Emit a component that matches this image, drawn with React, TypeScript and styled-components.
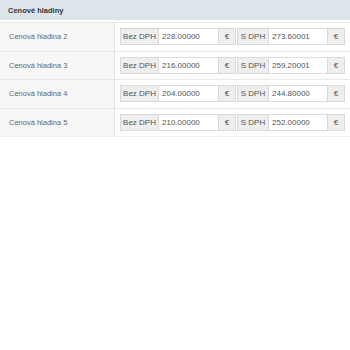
import { Fragment } from "react";
import styled, { createGlobalStyle } from "styled-components";

const GlobalStyle = createGlobalStyle`
  body {
    margin: 0;
    background: #ffffff;
    font-family: "Liberation Sans", Arial, sans-serif;
  }
`;

const Panel = styled.div`
  width: 350px;
  color: #555555;
`;

const PanelHeader = styled.div`
  height: 20px;
  display: flex;
  align-items: center;
  padding: 0 8px;
  background: #dde4ec;
  font-weight: bold;
  font-size: 7.5px;
  color: #333333;
`;

const Table = styled.div`
  display: grid;
  grid-template-columns: 115px 1fr;
  margin-top: 2px;
  border-bottom: 1px solid #eeeeee;
`;

const LabelCell = styled.div`
  height: 28.5px;
  box-sizing: border-box;
  display: flex;
  align-items: center;
  padding-left: 9px;
  background: #f7f7f7;
  border-top: 1px solid #e8e8e8;
  border-right: 1px solid #e3e3e3;
  font-size: 7.5px;
  color: #666666;
`;

const ValueCell = styled.div`
  height: 28.5px;
  box-sizing: border-box;
  display: flex;
  align-items: center;
  gap: 1px;
  padding-left: 5px;
  border-top: 1px solid #e8e8e8;
`;

const InputGroup = styled.div`
  display: flex;
  height: 17px;
`;

const Addon = styled.span<{ $w: number }>`
  width: ${(p) => p.$w}px;
  display: flex;
  align-items: center;
  justify-content: center;
  background: #eeeeee;
  border: 1px solid #d9d9d9;
  font-size: 8px;
  color: #555555;
  box-sizing: border-box;
`;

const Input = styled.span<{ $w: number }>`
  width: ${(p) => p.$w}px;
  display: flex;
  align-items: center;
  padding-left: 3px;
  border-top: 1px solid #dddddd;
  border-bottom: 1px solid #dddddd;
  background: #ffffff;
  font-size: 8px;
  color: #555555;
  box-sizing: border-box;
`;

const rows = [
  { name: "Cenová hladina 2", bez: "228.00000", s: "273.60001" },
  { name: "Cenová hladina 3", bez: "216.00000", s: "259.20001" },
  { name: "Cenová hladina 4", bez: "204.00000", s: "244.80000" },
  { name: "Cenová hladina 5", bez: "210.00000", s: "252.00000" },
];

export default function App() {
  return (
    <Panel>
      <GlobalStyle />
      <PanelHeader>Cenové hladiny</PanelHeader>
      <Table>
        {rows.map((r) => (
          <Fragment key={r.name}>
            <LabelCell>{r.name}</LabelCell>
            <ValueCell>
              <InputGroup>
                <Addon $w={39}>Bez DPH</Addon>
                <Input $w={59}>{r.bez}</Input>
                <Addon $w={18}>€</Addon>
              </InputGroup>
              <InputGroup>
                <Addon $w={32}>S DPH</Addon>
                <Input $w={58}>{r.s}</Input>
                <Addon $w={18}>€</Addon>
              </InputGroup>
            </ValueCell>
          </Fragment>
        ))}
      </Table>
    </Panel>
  );
}
